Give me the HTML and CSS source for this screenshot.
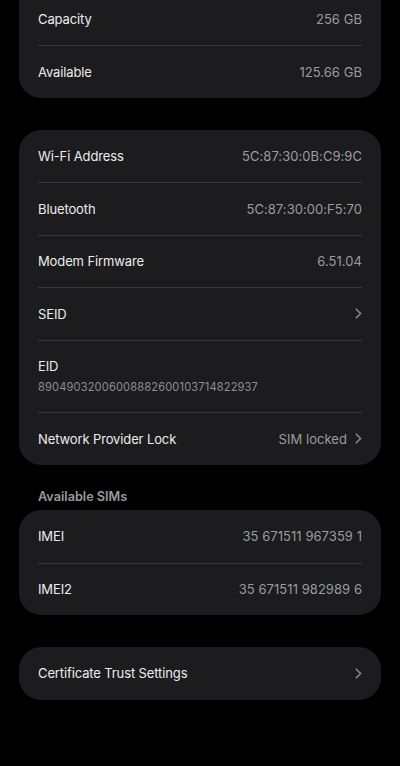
FILE: index.html
```html
<!DOCTYPE html>
<html lang="en">
<head>
<meta charset="utf-8">
<title>About</title>
<link rel="stylesheet" href="styles.css">
</head>
<body>
<main class="page">
  <section class="card card--continued">
    <div class="row"><span class="label">Capacity</span><span class="value">256 GB</span></div>
    <div class="row"><span class="label">Available</span><span class="value">125.66 GB</span></div>
  </section>

  <section class="card">
    <div class="row"><span class="label">Wi-Fi Address</span><span class="value">5C:87:30:0B:C9:9C</span></div>
    <div class="row"><span class="label">Bluetooth</span><span class="value">5C:87:30:00:F5:70</span></div>
    <div class="row"><span class="label">Modem Firmware</span><span class="value">6.51.04</span></div>
    <div class="row"><span class="label">SEID</span><span class="value"><svg class="chevron" viewBox="0 0 7 11" width="7" height="11"><path d="M1.2 1.2 L5.6 5.5 L1.2 9.8" /></svg></span></div>
    <div class="row row--stack"><span class="label">EID</span><span class="sub">89049032006008882600103714822937</span></div>
    <div class="row"><span class="label">Network Provider Lock</span><span class="value">SIM locked<svg class="chevron" viewBox="0 0 7 11" width="7" height="11"><path d="M1.2 1.2 L5.6 5.5 L1.2 9.8" /></svg></span></div>
  </section>

  <h2 class="section-title">Available SIMs</h2>
  <section class="card card--titled">
    <div class="row"><span class="label">IMEI</span><span class="value">35 671511 967359 1</span></div>
    <div class="row"><span class="label">IMEI2</span><span class="value">35 671511 982989 6</span></div>
  </section>

  <section class="card">
    <div class="row"><span class="label">Certificate Trust Settings</span><span class="value"><svg class="chevron" viewBox="0 0 7 11" width="7" height="11"><path d="M1.2 1.2 L5.6 5.5 L1.2 9.8" /></svg></span></div>
  </section>
</main>
</body>
</html>
```

FILE: styles.css
```css
html, body {
  margin: 0;
  padding: 0;
  background: #000;
}

body {
  font-family: Inter, "Noto Sans", sans-serif;
  color: #e8e8ea;
  -webkit-font-smoothing: antialiased;
}

.page {
  display: flex;
  flex-direction: column;
  padding: 0 19px;
  height: 766px;
  overflow: hidden;
  box-sizing: border-box;
}

.card {
  background: #1c1c1e;
  border-radius: 22px;
  margin-top: 32px;
  display: flex;
  flex-direction: column;
}

.card--continued {
  margin-top: -31px;
  padding-top: 23.5px;
}

.card--titled {
  margin-top: 4px;
}

.row {
  box-sizing: border-box;
  display: flex;
  align-items: center;
  justify-content: space-between;
  height: 52.5px;
  margin: 0 19px;
  font-size: 13px;
}

.row + .row {
  border-top: 1px solid #38383b;
}

.row--stack {
  flex-direction: column;
  align-items: flex-start;
  justify-content: center;
  height: 72.5px;
  gap: 6px;
}

.label {
  color: #ececee;
  letter-spacing: -0.12px;
}

.value {
  color: #9b9ba0;
  display: flex;
  align-items: center;
  gap: 8px;
  letter-spacing: 0.05px;
}

.sub {
  color: #8e8e93;
  font-size: 11.1px;
  letter-spacing: 0.15px;
}

.chevron {
  fill: none;
  stroke: #8a8a8f;
  stroke-width: 1.6;
  stroke-linecap: round;
  stroke-linejoin: round;
}

.section-title {
  margin: 23.5px 0 0 19px;
  font-size: 12.7px;
  line-height: 18px;
  font-weight: 600;
  color: #9a9a9f;
}
```
